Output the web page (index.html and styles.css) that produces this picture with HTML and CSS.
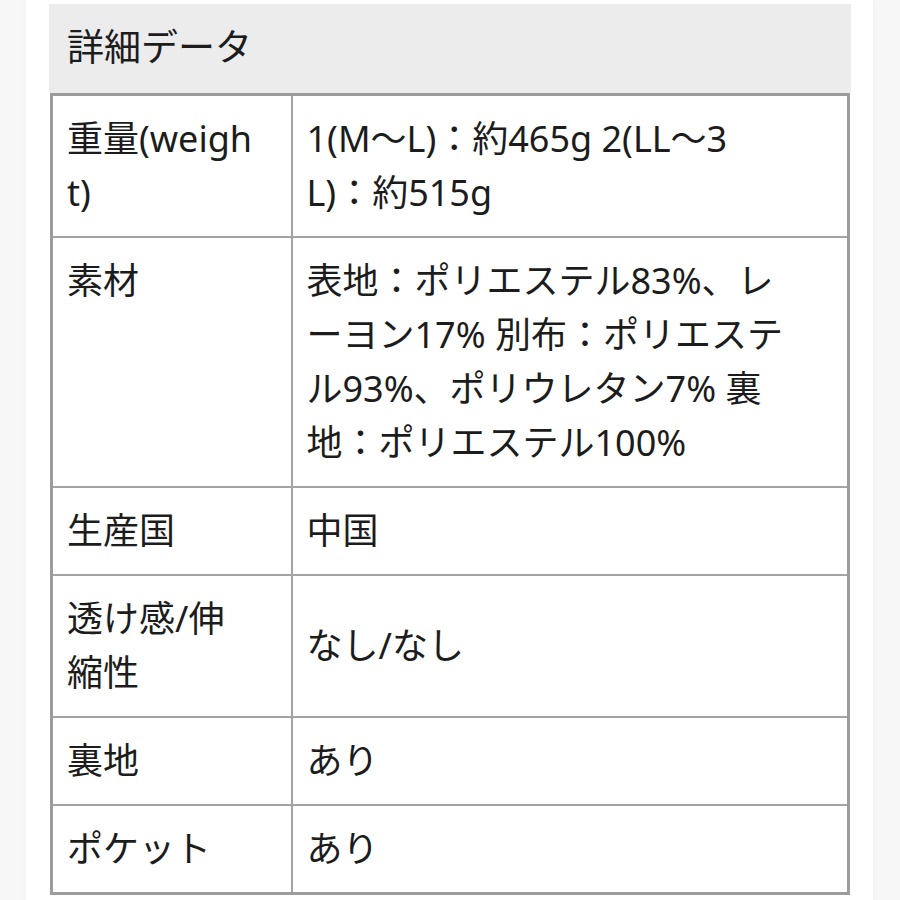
FILE: index.html
```html
<!DOCTYPE html>
<html lang="ja">
<head>
<meta charset="utf-8">
<title>詳細データ</title>
<link rel="stylesheet" href="styles.css">
</head>
<body>
<div class="page">
  <div class="title">詳細データ</div>
  <table class="spec">
    <colgroup><col class="col-label"><col class="col-value"></colgroup>
    <tbody>
      <tr><th>重量(weight)</th><td>1(M～L)：約465g 2(LL～3<br>L)：約515g</td></tr>
      <tr><th>素材</th><td>表地：ポリエステル83%、レーヨン17% 別布：ポリエステル93%、ポリウレタン7% 裏地：ポリエステル100%</td></tr>
      <tr><th>生産国</th><td>中国</td></tr>
      <tr><th>透け感/伸縮性</th><td>なし/なし</td></tr>
      <tr><th>裏地</th><td>あり</td></tr>
      <tr><th>ポケット</th><td>あり</td></tr>
    </tbody>
  </table>
</div>
</body>
</html>
```
FILE: styles.css
```css
html, body {
  margin: 0;
  padding: 0;
}
body {
  background: #f7f7f7;
  font-family: "Noto Sans", "Noto Sans CJK JP", sans-serif;
  color: #1c1c1c;
}
.page {
  margin: 0 27px 0 26px;
  background: #ffffff;
  padding: 4px 22px 10px 23px;
  min-height: 886px;
  box-shadow: 0 0 6px rgba(0,0,0,0.03);
}
.title {
  background: #ececec;
  height: 89px;
  line-height: 86px;
  padding-left: 18px;
  font-size: 37px;
}
.spec {
  width: 800px;
  margin: 0 1px;
  border-collapse: collapse;
  border: 3px solid #9c9c9c;
  table-layout: fixed;
  font-size: 36px;
  line-height: 54px;
}
.col-label { width: 240px; }
.spec th, .spec td {
  border: 2px solid #a3a3a3;
  padding: 16px 34px 16px 14px;
  text-align: left;
  font-weight: normal;
  word-break: break-all;
}
.spec th {
  vertical-align: top;
}
.spec td {
  vertical-align: middle;
  padding-right: 50px;
}
```
